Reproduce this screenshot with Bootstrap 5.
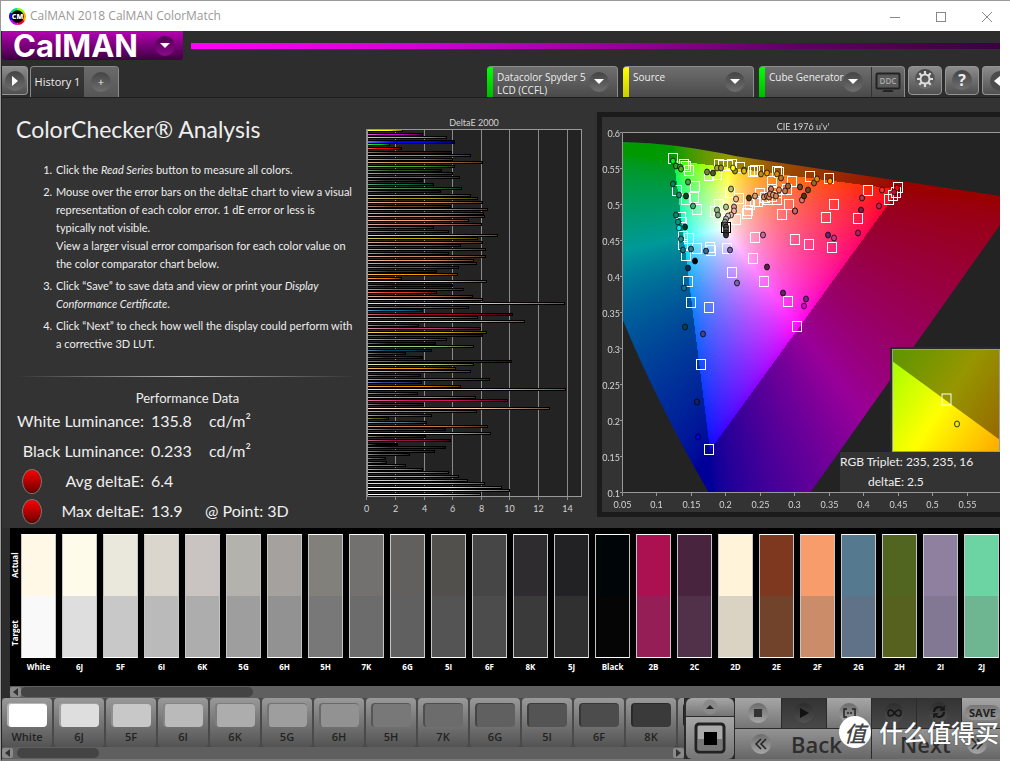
<!DOCTYPE html>
<html lang="en">
<head>
<meta charset="utf-8">
<meta name="viewport" content="width=device-width, initial-scale=1">
<title>CalMAN 2018 CalMAN ColorMatch</title>
<link href="https://cdn.jsdelivr.net/npm/bootstrap@5.3.0/dist/css/bootstrap.min.css" rel="stylesheet">
<style>
:root{--ui:"Open Sans","Noto Sans",sans-serif;--slim:Lato,"Open Sans",sans-serif}
body{font-family:var(--ui);background:#fff;font-size:12px;line-height:18px;overflow-x:hidden}
button{padding:0;border:0;color:inherit;font:inherit;background:none}
.window{border-left:1px solid #9a9a9a;border-top:1px solid #9a9a9a}
.titlebar{height:30px;background:#fff;color:#999;font-size:12px}
.titlebar button{width:46px;height:30px}
.app{margin-right:10px;background:#2d2d2d;color:#eee;border-left:1px solid #222;border-bottom:2px solid #777;overflow:hidden}
.logo{width:181px;height:29px;background:linear-gradient(#b800b4,#3c0040);border-radius:0 0 3px 3px;font:bold 31px/29px Inter,"Open Sans",sans-serif;color:#fff;padding-left:11px}
.rule{height:6px;margin-top:12px;background:linear-gradient(90deg,#f0f,#d000d0 30%,#5e0062 75%,#3c0040)}
.knob{width:20px;height:20px;border-radius:50%;background:linear-gradient(#444,#6e6e6e);display:inline-flex;align-items:center;justify-content:center;flex:none}
.logo .knob{background:linear-gradient(#4b0050,#8c0a8c)}
.tabs{height:35px;margin-top:2px}
.plate{width:34px;height:29px;background:linear-gradient(#8c8c8c,#505050);border:1px solid #949494;border-radius:4px;margin-top:4px}
.plate.expand{width:26px;border-left:0;border-radius:0 4px 4px 0}
.plate.collapse{width:18px;border-right:0;border-radius:4px 0 0 4px;text-align:right}
.tab{height:31px;border:1px solid #8a8a8a;border-bottom:0;border-radius:4px 4px 0 0;background:linear-gradient(#3a3a3a,#2f2f2f);margin:4px 0 0 2px;font-size:11px;overflow:hidden}
.tab .more{width:34px;background:linear-gradient(#6a6a6a,#565656)}
.tab .name{width:53px}
.tools{gap:3px}
.devices{gap:5px}
.device{height:31px;width:131px;margin-top:4px;background:linear-gradient(#6e6e6e,#4a4a4a);border-top:1px solid #8c8c8c;border-right:1px solid #8c8c8c;border-radius:4px 4px 0 0;font:10px/13px var(--ui);overflow:hidden}
.device .led{width:6px;align-self:stretch;background:linear-gradient(#0f0,#0b0)}
.device .led.warn{background:linear-gradient(#ff0,#cc0)}
.device .knob{margin-left:-8px}
.device.ddc{width:146px}
.ddc-btn{width:33px;border-left:1px solid #333}
.work{background:#333;border-top:1px solid #1e1e1e;height:431px}
.notes{width:357px;padding:0 0 0 14px;font-family:var(--slim)}
.notes h1{font-size:23px;line-height:40px;margin:11px 0 12px;font-weight:400}
.notes ol{padding-left:39px;margin:0;font-size:11px;line-height:18px}
.notes li{margin-bottom:4px;padding-left:1px}
.fade-line{height:1px;margin:23px 4px 0 0;background:linear-gradient(90deg,transparent,#bbb,transparent)}
.perf-title{font-size:13px;line-height:16px;padding-top:13px}
.perf{display:grid;grid-template-columns:36px 92px 57px 1fr;font-size:16px;line-height:30px;height:120px}
.perf>*{white-space:nowrap}
.perf .name{grid-column:1/3;text-align:right}
.perf .val{padding-left:7px}
.lamp{width:20px;height:25px;border-radius:50%;background:linear-gradient(#f00,#600);border:1px solid #777;margin:3px 0 0 6px}
.axis text,.axis{font:9px var(--slim);fill:#d4d4d4}
.cie{height:405px;margin-top:14px;background:#333;border:5px solid #1b1b1b;border-right:0;display:grid;grid-template-columns:minmax(0,1fr);overflow:hidden;position:relative}
.cie>canvas,.cie>svg{grid-area:1/1}
.cie>canvas{margin:16px 0 0 20px}
.zoomed{position:absolute;right:0;top:232px;width:108px;height:103px;outline:2px solid #2b2b2b}
.readout{position:absolute;right:0;top:335px;width:160px;background:#333;font:12px/20px var(--slim)}
.compare{background:#000;margin-left:8px;height:158px;padding:6px 0 0 11px;position:relative}
.compare .side{position:absolute;left:0;writing-mode:vertical-rl;transform:rotate(180deg);font:bold 8px/10px var(--ui);width:11px;text-align:center;height:62px;color:#fff}
.chip{width:35px;flex:none;font:bold 8px/18px var(--ui);text-align:center;color:#fff;white-space:nowrap}
.chip i{display:block;height:62px;border:solid #c4c4c4;border-width:0 1px}
.chip i:first-child{border-top:1px solid #fff}
.chip i:nth-child(2){border-bottom:1px solid #fff}
.chip-row{gap:6px}
.track{height:12px;background:#5f5f5f}
.track .thumb{height:10px;border-radius:5px;background:#444}
.track button{width:11px;height:10px;background:#8a8a8a;display:flex;align-items:center;justify-content:center;border-radius:2px}
.steps{width:682px;flex:none;overflow:hidden;background:#4a4a4a}
.step-row{gap:2px}
.step{width:50px;height:49px;flex:none;border-radius:4px;background:linear-gradient(#999,#535353);color:#222;font:600 11px/20px var(--ui);text-align:center;padding-top:5px}
.step i{display:block;width:40px;height:24px;margin:0 auto;border-radius:4px;border:solid rgba(0,0,0,.28);border-width:1px 0 0 2px}
.deck{display:grid;grid-template-columns:48px minmax(0,1fr);gap:1px;flex:1;min-width:0;background:#2b2b2b;position:relative;padding-left:2px;height:61px;overflow:hidden}
.lift{gap:1px}
.lift button:first-child{height:18px}
.lit{background:linear-gradient(#a6a6a6,#757575)}
.dim{background:linear-gradient(#333,#484848)}
.deck .knob{background:linear-gradient(#6c6c6c,#a6a6a6)}
.deck .dim .knob{background:linear-gradient(#2c2c2c,#505050)}
.transport{display:grid;grid-template-columns:46px repeat(4,44px) minmax(38px,1fr);gap:1px;height:30px}
.nav-row{display:grid;grid-template-columns:136px minmax(0,1fr);gap:1px;height:30px;margin-top:1px}
.nav-row button{background:linear-gradient(#949494,#666);color:#2e2e2e;font:600 22px/28px var(--ui);white-space:nowrap}
.save{font:bold 11px/18px var(--ui);color:#222;border-radius:8px;background:linear-gradient(#777,#999);padding:0 4px;margin-left:3px}
.stamp{position:absolute;right:1px;bottom:11px;color:#fff;font:500 24px/32px "Noto Sans CJK SC",sans-serif;white-space:nowrap;text-shadow:0 0 2px #444;pointer-events:none}
.stamp b{width:32px;height:32px;border-radius:50%;background:#fff;color:#444;font-size:22px;font-weight:500;font-style:italic;display:inline-flex;align-items:center;justify-content:center;text-shadow:none}
</style>
</head>
<body>
<div class="window">
<header class="titlebar d-flex align-items-center">
  <svg class="ms-2 me-1" width="17" height="17" viewBox="0 0 17 17" aria-hidden="true">
    <g fill="none" stroke-width="3"><path d="M8.5 1.5A7 7 0 0 1 14.5 5" stroke="#8cff00"/><path d="M14.5 5A7 7 0 0 1 14.5 12" stroke="#ffb000"/><path d="M14.5 12A7 7 0 0 1 8.5 15.5" stroke="#f02"/><path d="M8.5 15.5A7 7 0 0 1 2.5 12" stroke="#c0f"/><path d="M2.5 12A7 7 0 0 1 2.5 5" stroke="#20f"/><path d="M2.5 5A7 7 0 0 1 8.5 1.5" stroke="#0d8"/></g>
    <circle cx="8.5" cy="8.5" r="6.3" fill="#000"/><text x="8.5" y="11" text-anchor="middle" font-family="Open Sans" font-weight="800" font-size="7" fill="#fff">CM</text>
  </svg>
  <span class="flex-grow-1">CalMAN 2018 CalMAN ColorMatch</span>
  <button aria-label="Minimize"><svg width="12" height="12"><path d="M1 6.500H11" stroke="#888"/></svg></button>
  <button aria-label="Maximize"><svg width="12" height="12"><rect x="1.500" y="1.500" width="9" height="9" fill="none" stroke="#888"/></svg></button>
  <button aria-label="Close"><svg width="12" height="12"><path d="M1 1L11 11M11 1L1 11" stroke="#888"/></svg></button>
</header>

<div class="app">
  <div class="d-flex">
    <button class="logo d-flex align-items-center justify-content-between pe-2" aria-label="CalMAN menu"><span>CalMAN</span><span class="knob"><svg width="10" height="6"><path d="M0 0H10L5 5Z" fill="#fff"/></svg></span></button>
    <div class="rule flex-grow-1 ms-2"></div>
  </div>

  <div class="tabs d-flex">
    <button class="plate expand" aria-label="Expand"><span class="knob"><svg width="7" height="10"><path d="M1 0L7 5L1 10Z" fill="#fff"/></svg></span></button>
    <div class="tab d-flex">
      <button class="name text-nowrap">History 1</button><button class="more" aria-label="Add history"><span class="knob">+</span></button>
    </div>
    <div class="tools d-flex ms-auto">
      <div class="devices d-flex">
        <div class="device d-flex pe-2"><span class="led me-1"></span><span class="flex-grow-1 text-nowrap pt-1">Datacolor Spyder 5<br>LCD (CCFL)</span><button class="knob align-self-center" aria-label="Meter menu"><svg width="10" height="6"><path d="M0 0H10L5 5Z" fill="#fff"/></svg></button></div>
        <div class="device d-flex pe-2"><span class="led warn me-1"></span><span class="flex-grow-1 pt-1">Source</span><button class="knob align-self-center" aria-label="Source menu"><svg width="10" height="6"><path d="M0 0H10L5 5Z" fill="#fff"/></svg></button></div>
        <div class="device ddc d-flex"><span class="led me-1"></span><span class="flex-grow-1 pt-1 text-nowrap">Cube Generator</span><button class="knob align-self-center me-2" aria-label="Display menu"><svg width="10" height="6"><path d="M0 0H10L5 5Z" fill="#fff"/></svg></button>
          <button class="ddc-btn" aria-label="DDC"><svg width="26" height="21"><rect x="1.500" y="1.500" width="23" height="15" rx="1" fill="#5a5a5a" stroke="#222" stroke-width="2"/><path d="M9 18H17L19 20H7Z" fill="#222"/><text x="13" y="12" text-anchor="middle" font-size="8" font-family="Open Sans" font-weight="600" fill="#aaa">DDC</text></svg></button></div>
      </div>
      <button class="plate" aria-label="Settings"><span class="knob"><svg width="16" height="16" viewBox="0 0 16 16" fill="none" stroke="#ddd"><circle cx="8" cy="8" r="4.500" stroke-width="2"/><path d="M8 0V3M8 13V16M0 8H3M13 8H16M2.300 2.300L4.500 4.500M11.500 11.500L13.700 13.700M2.300 13.700L4.500 11.500M11.500 4.500L13.700 2.300" stroke-width="2.200"/></svg></span></button>
      <button class="plate" aria-label="Help"><span class="knob fw-bold fs-6">?</span></button>
      <button class="plate collapse show" aria-label="Collapse"><svg width="13" height="20"><path d="M13 0A10 10 0 0 0 13 20Z" fill="#4c4c4c"/><path d="M13 5L7 10L13 15Z" fill="#fff"/></svg></button>
    </div>
  </div>

  <main class="work d-flex">
    <section class="notes flex-shrink-0">
      <h1>ColorChecker® Analysis</h1>
      <ol>
        <li>Click the <em>Read Series</em> button to measure all colors.</li>
        <li>Mouse over the error bars on the deltaE chart to view a visual<br>representation of each color error. 1 dE error or less is<br>typically not visible.<br>View a larger visual error comparison for each color value on<br>the color comparator chart below.</li>
        <li>Click “Save” to save data and view or print your <em>Display<br>Conformance Certificate</em>.</li>
        <li>Click “Next” to check how well the display could perform with<br>a corrective 3D LUT.</li>
      </ol>
      <div class="fade-line"></div>
      <div class="perf-title text-center">Performance Data</div>
      <div class="perf">
        <span class="name">White Luminance:</span><span class="val">135.8</span><span class="ps-2">cd/m²</span>
        <span class="name">Black Luminance:</span><span class="val">0.233</span><span class="ps-2">cd/m²</span>
        <span class="lamp"></span><span class="text-end">Avg deltaE:</span><span class="val">6.4</span><span></span>
        <span class="lamp"></span><span class="text-end">Max deltaE:</span><span class="val">13.9</span><span class="ps-1">@ Point: 3D</span>
      </div>
    </section>
    <svg id="delta" class="axis flex-shrink-0" width="238" height="420" role="img" aria-label="DeltaE 2000">
      <defs><linearGradient id="shade"><stop offset="0" stop-color="#fff" stop-opacity=".4"/><stop offset=".3" stop-color="#fff" stop-opacity="0"/><stop offset=".6" stop-opacity="0"/><stop offset="1" stop-opacity=".6"/></linearGradient></defs>
    </svg>
    <section class="cie flex-grow-1">
      <canvas id="gamut" width="520" height="360"></canvas>
      <svg id="points" class="axis" width="100%" height="395" role="img" aria-label="CIE 1976 u'v'"></svg>
      <svg class="zoomed" viewBox="0 0 108 103">
        <defs>
          <linearGradient id="hue" gradientUnits="userSpaceOnUse" x1="0" y1="20" x2="112" y2="94"><stop offset="0" stop-color="#af0"/><stop offset=".46" stop-color="#ff0"/><stop offset="1" stop-color="#fa0"/></linearGradient>
        </defs>
        <rect width="108" height="103" fill="url(#hue)"/>
        <path d="M0 12L108 91V0H0Z" opacity=".41"/>
        <rect x=".5" y=".5" width="107" height="102" fill="none" stroke="#999"/>
        <rect x="50" y="45" width="9" height="11" fill="none" stroke="#fff"/>
        <ellipse cx="65" cy="75" rx="2.500" ry="3" fill="#ee0" stroke="#331"/>
      </svg>
      <div class="readout"><div class="text-nowrap">RGB Triplet: 235, 235, 16</div><div class="ps-4 ms-1">deltaE: 2.5</div></div>
    </section>
  </main>

  <div class="compare overflow-hidden">
    <span class="side" style="top:6px">Actual</span><span class="side" style="top:74px">Target</span>
    <div class="chip-row d-flex" id="chips"></div>
  </div>
  <div class="track d-flex align-items-center ms-2"><button aria-label="Scroll swatches left"><svg width="5" height="8"><path d="M5 0V8L0 4Z" fill="#333"/></svg></button><div class="thumb" style="width:23.400%"></div></div>

  <footer class="d-flex">
    <div class="steps">
      <div class="step-row d-flex" id="steps"></div>
      <div class="track d-flex align-items-center"><button aria-label="Scroll steps left"><svg width="5" height="8"><path d="M5 0V8L0 4Z" fill="#333"/></svg></button><div class="thumb ms-1" style="width:12%"></div><button class="ms-auto" aria-label="Scroll steps right"><svg width="5" height="8"><path d="M0 0V8L5 4Z" fill="#333"/></svg></button></div>
    </div>
    <div class="deck">
      <div class="lift d-flex flex-column rounded-2 overflow-hidden">
        <button class="lit d-flex justify-content-center align-items-center" aria-label="Raise panel"><svg width="16" height="16"><circle cx="8" cy="8" r="7.500" fill="#8a8a8a"/><path d="M4 10H12L8 6Z" fill="#222"/></svg></button>
        <button class="lit flex-grow-1" aria-label="Read current"><svg width="32" height="32"><rect x="2" y="2" width="28" height="28" rx="3" fill="#aaa" stroke="#222" stroke-width="3"/><path d="M4 17H28V28H4Z" fill="#777"/><rect x="10" y="10" width="13" height="13" fill="#000"/></svg></button>
      </div>
      <div>
        <div class="transport">
          <button class="lit" aria-label="Stop"><span class="knob"><svg width="8" height="8"><rect width="8" height="8" fill="#333"/></svg></span></button>
          <button class="dim" aria-label="Play"><span class="knob"><svg width="10" height="10"><path d="M1 0L10 5L1 10Z" fill="#111"/></svg></span></button>
          <button class="lit" aria-label="Read series"><span class="knob"><svg width="13" height="10" fill="none" stroke="#222" stroke-width="1.500"><path d="M4 1H1V9H4M9 1H12V9H9M4 5H6M7 5H9"/></svg></span></button>
          <button class="dim" aria-label="Read continuous"><span class="knob"><svg width="15" height="8" fill="none" stroke="#151515" stroke-width="1.500"><path d="M7.500 4C5 0 1 0 1 4S5 8 7.500 4S14 0 14 4S10 8 7.500 4"/></svg></span></button>
          <button class="dim" aria-label="Repeat"><span class="knob"><svg width="14" height="14" fill="none" stroke="#151515" stroke-width="2"><path d="M2 7A5 5 0 0 1 11 4M12 7A5 5 0 0 1 3 10"/><path d="M8 5H12V1M6 9H2V13" stroke-width="1.500"/></svg></span></button>
          <button class="lit text-start text-nowrap overflow-hidden"><span class="save">SAVE</span></button>
        </div>
        <div class="nav-row">
          <button class="d-flex align-items-center"><span class="knob mx-3"><svg width="12" height="12" fill="none" stroke="#222" stroke-width="1.500"><path d="M6 1L1 6L6 11M11 1L6 6L11 11"/></svg></span><span class="ps-1">Back</span></button>
          <button class="d-flex align-items-center ps-4"><span class="ps-1">Next</span><span class="knob ms-3"><svg width="12" height="12" fill="none" stroke="#222" stroke-width="1.500"><path d="M1 1L6 6L1 11M6 1L11 6L6 11"/></svg></span></button>
        </div>
      </div>
      <div class="stamp d-flex align-items-center gap-2"><b>值</b><span>什么值得买</span></div>
    </div>
  </footer>
</div>
</div>

<script src="https://cdn.jsdelivr.net/npm/bootstrap@5.3.0/dist/js/bootstrap.bundle.min.js"></script>
<script>
// Comparator swatches: name, measured colour, target colour
const chips = `White #fff8e6 #f9f9f9|6J #fffbea #dedede|5F #eae7dc #c8c8c8|6I #dad6ce #bababa|6K #c9c4c1 #adadad|5G #b4b2ad #9e9e9e|6H #a4a19e #929292|5H #81807a #787878|7K #72716f #6c6c6c|6G #61605e #606060|5I #52504c #545454|6F #464646 #4c4c4c|8K #2f2c2f #3a3a3a|5J #222224 #303030|Black #000508 #050505|2B #ab1050 #941e55|2C #48243f #513049|2D #fff3d9 #dad2c2|2E #7f3820 #71432a|2F #f89c6c #cb8c69|2G #557a90 #5f7288|2H #526520 #56611f|2I #9080a0 #837893|2J #6cd3a2 #6eb592`.split('|').map(s => s.split(' '));
document.getElementById('chips').innerHTML = chips.map(([n, a, t]) => `<div class="chip"><i style="background:${a}"></i><i style="background:${t}"></i>${n}</div>`).join('');
document.getElementById('steps').innerHTML = chips.slice(0, 14).map(([n, , t], i) => `<button class="step"><i style="background:${i ? t : '#fff'}"></i>${n}</button>`).join('');

// DeltaE bars, top to bottom: bar end, colour
const rows = `142 ff0|202 c0c|272 3dd|296 00f|103 0d0|137 f00|288 4a2a20|344 8a2|290 882|381 c84|297 4a2|257 2a5a20|290 682|312 387|202 333|233 074|317 484|254 433|344 aa2|366 a92|381 d85|286 742|395 c87|383 b76|386 b87|340 f96|377 c76|233 087|278 286|425 fb0|366 ba0|381 c75|314 953|389 b76|278 952|389 c86|354 e96|362 b76|308 567|242 044|305 f90|137 f70|392 dd9|290 034|323 289|242 e32|350 b75|381 ccc|626 fbb|338 47a|202 07a|470 a02|365 c66|506 fcc|189 088|374 b47|392 eb0|380 b02|272 4a2|240 028|354 9c7|228 046|150 727|202 424|467 c01|354 cd8|299 e90|344 9b1|194 546|401 c43|198 349|314 e80|630 fcb|186 559|359 c79|455 d16|205 503040|581 fca|362 4a7|227 7060a0|98 561|212 578|396 c74|270 733|404 ddc|210 432|285 914|126 000|270 333|236 444|161 555|89 555|92 666|150 777|202 888|279 999|308 aaa|336 bbb|386 ccc|438 eee|462 eee|375 fff`.split('|').map(s => s.split(' '));
let d = '<text x="115" y="28" text-anchor="middle">DeltaE 2000</text><rect x="8" y="31" width="215" height="367" fill="#232323"/>';
for (let k = 0; k <= 7; k++) {
  const x = Math.round(7.3 + 28.6 * k) + .5;
  d += `<path d="M${x} 31V402" stroke="#8a8a8a"/><text x="${x}" y="414" text-anchor="middle">${k * 2}</text>`;
}
rows.forEach(([e, c], i) => {
  const y = Math.round(32 + i * 364 / (rows.length - 1)), w = Math.round((e - 36) / 3), h = i === 3 ? 2 : 1;
  d += `<rect x="8" y="${y - 1}" width="${w + 1}" height="${h + 2}" fill="#000"/><rect x="9" y="${y}" width="${w - 1}" height="${h}" fill="#${c}"/><rect x="9" y="${y}" width="${w - 1}" height="${h}" fill="url(#shade)"/>`;
});
d += '<rect x="8.500" y="31.500" width="214" height="367" fill="none" stroke="#999"/>';
document.getElementById('delta').insertAdjacentHTML('beforeend', d);

// Chromaticity diagram: u' = .05 at x 0, v' = .6 at y 0
const cv = document.getElementById('gamut'), cx = cv.getContext('2d');
const img = cx.createImageData(520, 360);
const tri = [[51.5, 27], [276.5, 56], [87.5, 317]];
const side = (a, b, x, y) => (b[0] - a[0]) * (y - a[1]) - (b[1] - a[1]) * (x - a[0]);
for (let y = 0; y < 360; y++) for (let x = 0; x < 520; x++) {
  const u = .05 + x / 689, v = .6 - y / 720;
  const X = 9 * u / (4 * v), Z = (12 - 3 * u - 20 * v) / (4 * v);
  const c = [3.2406 * X - 1.5372 - .4986 * Z, -.9689 * X + 1.8758 + .0415 * Z, .0557 * X - .204 + 1.057 * Z].map(n => Math.max(0, n));
  const m = Math.max(...c), inside = side(tri[0], tri[1], x, y) >= 0 && side(tri[1], tri[2], x, y) >= 0 && side(tri[2], tri[0], x, y) >= 0;
  const g = c.map(n => 255 * Math.pow(n / m, 1 / 1.6) * (inside ? 1 : .6));
  img.data.set([g[0], g[1], g[2], 255], (y * 520 + x) * 4);
}
cx.putImageData(img, 0, 0);
cx.globalCompositeOperation = 'destination-in';
cx.fill(new Path2D('M0 9C40 10 70 14 113 23L378 63L440 73L378 92L188 360H87Q35 270 0 185Z'));
cx.globalCompositeOperation = 'destination-over';
cx.fillStyle = '#232323'; cx.fillRect(0, 0, 520, 360);

let s = '<g transform="translate(-602 -117)"><path d="M622.500 492.500V132.500H1200M622.500 492.500H1200" fill="none" stroke="#999"/><text x="803" y="130" text-anchor="middle">CIE 1976 u\'v\'</text>';
for (let k = 0; k <= 10; k++) {
  const y = 132.5 + 36 * k, n = +(.6 - .05 * k).toFixed(2);
  s += `<path d="M620 ${y}H622" stroke="#999"/><text x="620" y="${y + 4}" text-anchor="end">${n}</text>`;
}
// Only label the ticks that fit in the panel
const last = Math.floor((document.getElementById('points').clientWidth - 32) / 34.45);
for (let k = 0; k <= last; k++) {
  const x = Math.round(622 + 34.45 * k) + .5;
  s += `<path d="M${x} 493V496" stroke="#999"/><text x="${x}" y="508" text-anchor="middle">${+(.05 + .05 * k).toFixed(2)}</text>`;
}
s += '</g>';
// Targets (squares) and readings (dots), in thirds of a pixel from the panel corner
const targets = '235,147 268,165 272,170 283,182 247,242 301,232 296,265 272,270 307,301 343,198 367,194 371,164 385,168 398,168 412,165 434,174 475,186 480,182 492,182 545,186 553,188 530,217 592,216 404,248 433,268 373,285 359,307 368,325 422,330 455,312 458,303 466,285 480,275 490,275 496,251 510,265 520,270 532,240 545,250 530,262 545,270 575,240 583,285 562,316 601,390 481,385 397,418 412,490 475,448 508,517 580,577 281,387 307,418 346,414 348,424 272,437 265,405 265,380 262,340 258,324 280,517 288,580 343,595 646,202 703,208 820,244 910,235 903,248 895,257 883,271 718,286 694,325 790,328 643,406 712,415 319,766 607,652 343,1021';
const reads = '234,154,0e2 243,167,2a2 255,170,4a3 258,176,5a2 336,187,782 353,190,552 366,175,aa2 379,175,992 420,184,990 414,175,ff0 447,181,ca0 448,184,db0 498,193,b82 517,190,e90 545,193,d80 558,205,b72 279,217,4a4 234,223,085 253,256,286 273,259,142 293,289,4a6 408,238,bb6 423,268,fb8 461,265,531 480,259,d96 393,292,ac8 366,301,9b8 369,316,8a8 242,316,087 248,337,098 251,355,0ee 270,352,033 257,388,288 264,421,178 288,418,378 333,424,468 300,454,000 280,475,035 268,535,07a 406,421,76a 426,520,76a 504,376,c6a 517,472,524 564,550,626 508,262,d85 515,258,c75 522,262,d96 528,238,c75 525,253,d86 533,256,d96 544,259,c85 551,241,e85 569,244,c75 578,229,963 615,232,742 600,304,d76 621,271,d77 627,257,531 639,241,742 657,220,963 667,208,e80 704,214,f90 600,303,c66 418,292,d99 418,304,fa9 408,316,dba 399,318,dcc 392,328,bbb 391,336,999 391,345,666 392,352,444 393,360,555 393,368,444 393,376,333 861,239,e33 801,265,b35 906,235,f00 897,247,b13 852,289,b25 798,301,724 789,370,a26 699,376,627 717,385,c38 633,568,728 627,587,d0c 270,652,045 324,671,448 306,877,126 310,982,00e'.split(' ').map(p => p.split(','));
const at = n => Math.round(n / 3 - 7) + .5;
targets.split(' ').forEach(p => { const [x, y] = p.split(',').map(at); s += `<rect x="${x - 5}" y="${y - 6}" width="9" height="10" fill="none" stroke="#fff"/>`; });
s += '<rect x="119.500" y="105.500" width="9" height="10" fill="none" stroke="#000"/>';
reads.forEach(([x, y, c]) => s += `<ellipse cx="${at(x) - .5}" cy="${at(y) - .5}" rx="2.500" ry="3" fill="#${c}" stroke="#000" stroke-opacity=".75"/>`);
document.getElementById('points').innerHTML = s;
</script>
</body>
</html>
